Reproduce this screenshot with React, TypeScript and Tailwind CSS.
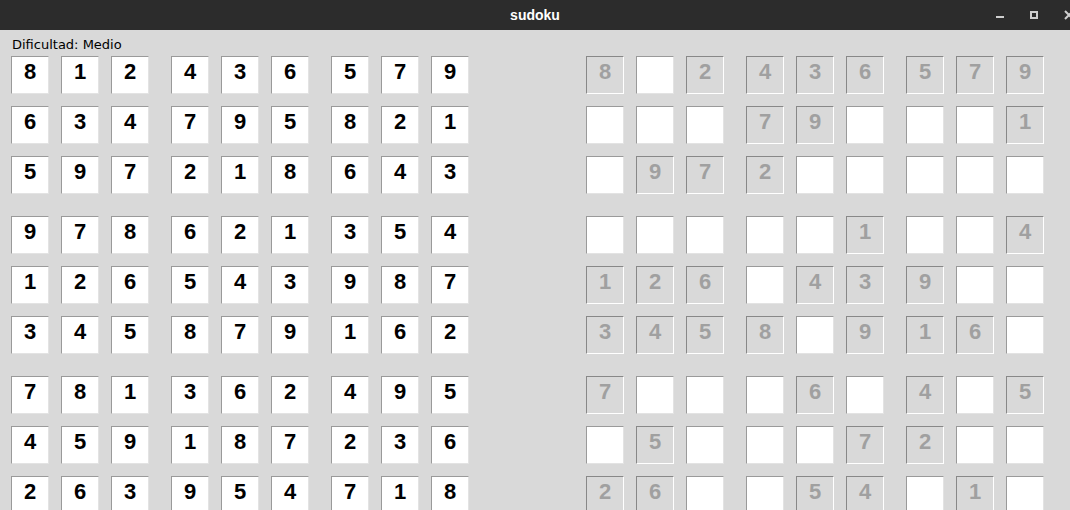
const solution: number[][] = [
  [8, 1, 2, 4, 3, 6, 5, 7, 9],
  [6, 3, 4, 7, 9, 5, 8, 2, 1],
  [5, 9, 7, 2, 1, 8, 6, 4, 3],
  [9, 7, 8, 6, 2, 1, 3, 5, 4],
  [1, 2, 6, 5, 4, 3, 9, 8, 7],
  [3, 4, 5, 8, 7, 9, 1, 6, 2],
  [7, 8, 1, 3, 6, 2, 4, 9, 5],
  [4, 5, 9, 1, 8, 7, 2, 3, 6],
  [2, 6, 3, 9, 5, 4, 7, 1, 8],
];

// 0 = empty (editable) cell
const puzzle: number[][] = [
  [8, 0, 2, 4, 3, 6, 5, 7, 9],
  [0, 0, 0, 7, 9, 0, 0, 0, 1],
  [0, 9, 7, 2, 0, 0, 0, 0, 0],
  [0, 0, 0, 0, 0, 1, 0, 0, 4],
  [1, 2, 6, 0, 4, 3, 9, 0, 0],
  [3, 4, 5, 8, 0, 9, 1, 6, 0],
  [7, 0, 0, 0, 6, 0, 4, 0, 5],
  [0, 5, 0, 0, 0, 7, 2, 0, 0],
  [2, 6, 0, 0, 5, 4, 0, 1, 0],
];

const boxes = [0, 1, 2, 3, 4, 5, 6, 7, 8];
const cells = [0, 1, 2, 3, 4, 5, 6, 7, 8];

function Cell({ value, locked }: { value: number; locked: boolean }) {
  const cls = locked
    ? "border-t-[#888888] border-l-[#888888] border-b-white border-r-white bg-[#d9d9d9] text-[#a0a0a0]"
    : "border-t-[#9a9a9a] border-l-[#9a9a9a] border-b-[#e3e3e3] border-r-[#e3e3e3] bg-white text-black";
  return (
    <div
      className={`flex h-[38px] w-[38px] items-center justify-center border pb-[7px] text-[22px] leading-normal font-bold ${cls}`}
    >
      {value ? value : ""}
    </div>
  );
}

function Board({ values, locked }: { values: number[][]; locked: boolean }) {
  return (
    <div className="grid grid-cols-3 gap-[22px]">
      {boxes.map((b) => {
        const br = Math.floor(b / 3) * 3;
        const bc = (b % 3) * 3;
        return (
          <div key={b} className="grid grid-cols-3 gap-[12px]">
            {cells.map((c) => {
              const v = values[br + Math.floor(c / 3)][bc + (c % 3)];
              return <Cell key={c} value={v} locked={locked && v !== 0} />;
            })}
          </div>
        );
      })}
    </div>
  );
}

export default function App() {
  return (
    <div
      className="flex h-[510px] w-[1070px] flex-col overflow-hidden bg-[#d9d9d9]"
      style={{ fontFamily: '"Liberation Sans", Arial, sans-serif' }}
    >
      <div className="grid h-[30px] shrink-0 grid-cols-[1fr_auto_1fr] items-center bg-[#2c2c2c]">
        <div />
        <div className="text-[14px] font-bold text-white">sudoku</div>
        <div className="flex items-center justify-end gap-[26px]">
          <div className="mt-[3px] h-[2px] w-[8px] bg-[#cfcfcf]" />
          <div className="h-[8px] w-[8px] border-2 border-[#cfcfcf]" />
          <svg width="6" height="10" viewBox="0 0 6 10">
            <path d="M1 1 L9 9 M9 1 L1 9" stroke="#cfcfcf" strokeWidth="2" />
          </svg>
        </div>
      </div>
      <div
        className="h-[26px] shrink-0 pl-[12px] pt-[7px] text-[13px] leading-[16px] text-black"
        style={{ fontFamily: '"DejaVu Sans", sans-serif' }}
      >
        Dificultad: Medio
      </div>
      <div className="flex gap-[117px] pl-[11px]">
        <Board values={solution} locked={false} />
        <Board values={puzzle} locked={true} />
      </div>
    </div>
  );
}
